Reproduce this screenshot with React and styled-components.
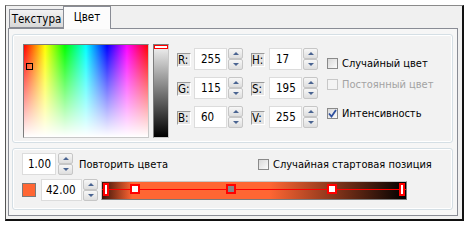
import styled, { createGlobalStyle } from 'styled-components'

const Global = createGlobalStyle`
    html, body {
        margin: 0;
        padding: 0;
        background: #ffffff;
    }
    * { box-sizing: border-box; }
    body {
        font-family: "DejaVu Sans Condensed", "DejaVu Sans", Verdana, sans-serif;
        font-size: 11px;
        color: #000;
    }
`

/* WINDOW */
const Frame = styled.div`
    margin: 5px 0 0 5px;
    width: 459px;
    height: 216px;
    background: #f0f0f0;
    border-top: 1px solid #8a8a8a;
    border-left: 1px solid #555;
    border-right: 2px solid #111;
    border-bottom: 2px solid #111;
    padding: 0 4px 3px 2px;
    display: flex;
    flex-direction: column;
`
const TabStrip = styled.div`
    height: 22px;
    display: flex;
    align-items: flex-end;
    padding-left: 1px;
    position: relative;
    z-index: 1;
`
const Tab = styled.div`
    width: ${p => p.$w}px;
    height: ${p => (p.$active ? 23 : 19)}px;
    margin-bottom: ${p => (p.$active ? -1 : 0)}px;
    margin-left: ${p => (p.$active ? -1 : 0)}px;
    border: 1px solid #898c95;
    border-bottom: ${p => (p.$active ? 'none' : '1px solid #898c95')};
    background: ${p => (p.$active ? '#fcfcfc' : 'linear-gradient(#f2f2f2, #d8d8d8)')};
    font-size: 11.5px;
    display: flex;
    justify-content: center;
    align-items: ${p => (p.$active ? 'flex-start' : 'center')};
    padding-top: ${p => (p.$active ? 3 : 0)}px;
`
const Panel = styled.div`
    flex: 1;
    border: 1px solid #898c95;
    background: #f6f6f6;
    padding: 5px 4px 5px 3px;
    display: flex;
    flex-direction: column;
    gap: 5px;
`
const Group = styled.div`
    border: 1px solid #d5dfe5;
    border-radius: 3px;
    box-shadow: inset 0 0 0 1px #ffffff;
    background: #f2f2f2;
    height: ${p => p.$h}px;
    padding: ${p => p.$pad};
`

/* COLOR PICKER */
const PickerRow = styled.div`
    display: flex;
    align-items: flex-start;
`
const Spectrum = styled.div`
    width: 126px;
    height: 94px;
    position: relative;
    border: 1px solid;
    border-color: #7c7c7c #c8c8c8 #c8c8c8 #7c7c7c;
    background:
        linear-gradient(rgba(255,255,255,0), #ffffff),
        linear-gradient(90deg, #ff0000 0%, #ffff00 17%, #00ff00 33%, #00ffff 50%, #0000ff 67%, #ff00ff 83%, #ff0000 100%);
`
const Selector = styled.div`
    position: absolute;
    left: 2px;
    top: 18px;
    width: 7px;
    height: 7px;
    border: 1px solid #000;
`
const Bright = styled.div`
    width: 16px;
    height: 94px;
    margin-left: 4px;
    position: relative;
    border: 1px solid;
    border-color: #7c7c7c #c8c8c8 #c8c8c8 #7c7c7c;
    background: linear-gradient(#f4f4f4, #000000);
`
const BrightMark = styled.div`
    position: absolute;
    left: 0;
    top: 0;
    width: 14px;
    height: 4px;
    border: 1px solid #ff0000;
    background: #fff;
`
const Fields = styled.div`
    display: grid;
    grid-template-columns: auto auto;
    row-gap: 7px;
    column-gap: 8px;
    margin-left: 8px;
    margin-top: 4px;
`
const Field = styled.div`
    display: flex;
    align-items: flex-start;
`
const Letter = styled.div`
    width: 14px;
    height: 14px;
    margin-top: 5px;
    margin-right: ${p => p.$gap}px;
    border: 1px solid;
    border-color: #9a9a9a #ffffff #ffffff #9a9a9a;
    background: #e4e4e4;
    font-size: 11.5px;
    line-height: 12px;
    white-space: nowrap;
`
const Input = styled.div`
    width: ${p => p.$w}px;
    height: 22px;
    background: #fff;
    border: 1px solid #dcdcdc;
    font-size: 11.5px;
    padding: 3px 0 0 ${p => p.$pl || 6}px;
`
const Spin = styled.div`
    width: 15px;
    height: 22px;
    margin-left: ${p => p.$gap || 1}px;
    display: flex;
    flex-direction: column;
`
const SpinBtn = styled.div`
    flex: 1;
    border: 1px solid #c6c6c6;
    border-radius: 2px;
    background: linear-gradient(#f7f7f7, #dedede);
    display: flex;
    align-items: center;
    justify-content: center;
`
const Arrow = styled.div`
    width: 0;
    height: 0;
    border-left: 3px solid transparent;
    border-right: 3px solid transparent;
    ${p => (p.$down ? 'border-top: 3px solid #4a6491;' : 'border-bottom: 3px solid #4a6491;')}
`

/* CHECKBOXES */
const Checks = styled.div`
    display: flex;
    flex-direction: column;
    margin-left: 9px;
    padding-top: 13px;
`
const CheckRow = styled.label`
    display: flex;
    align-items: center;
    gap: 4px;
    height: 13px;
    margin-bottom: ${p => p.$mb || 0}px;
    font-size: 11px;
    color: ${p => (p.$disabled ? '#a3a3a3' : '#000')};
    white-space: nowrap;
`
const Box = styled.div`
    width: 11px;
    height: 11px;
    border: 1px solid ${p => (p.$disabled ? '#c8c8c8' : '#8a8a8a')};
    background: ${p => (p.$disabled ? '#f4f4f4' : 'linear-gradient(135deg, #d8d8d8, #fbfbfb)')};
    display: flex;
    align-items: center;
    justify-content: center;
`

/* BOTTOM GROUP */
const Line = styled.div`
    display: flex;
    align-items: center;
    margin-bottom: ${p => p.$mb || 0}px;
`
const Caption = styled.span`
    width: ${p => p.$w}px;
    font-size: 11px;
    margin-left: ${p => p.$ml}px;
    white-space: nowrap;
`
const Swatch = styled.div`
    width: 14px;
    height: 14px;
    border: 1px solid #7a7a7a;
    background: #ff6633;
    margin-right: 5px;
`
const GradBar = styled.div`
    position: relative;
    width: 306px;
    height: 19px;
    margin-left: 3px;
    border: 1px solid;
    border-color: #c8c8c8 #7a7a7a #7a7a7a #c8c8c8;
    background: linear-gradient(90deg, #3a1208 0%, #ff6633 10%, #ff6633 55%, #000000 100%);
`
const RedLine = styled.div`
    position: absolute;
    left: 0;
    right: 0;
    top: 7px;
    height: 1px;
    background: #ff0000;
`
const Marker = styled.div`
    position: absolute;
    top: ${p => (p.$edge ? 1 : 2)}px;
    left: ${p => p.$x}px;
    width: ${p => (p.$edge ? 6 : 10)}px;
    height: ${p => (p.$edge ? 13 : 10)}px;
    border: 2px solid #ff0000;
    background: ${p => (p.$grey ? '#888888' : '#ffffff')};
`

const Spinner = ({gap}) => (
    <Spin $gap={gap}>
        <SpinBtn><Arrow /></SpinBtn>
        <SpinBtn><Arrow $down /></SpinBtn>
    </Spin>
)

const Check = ({label, checked, disabled, mb}) => (
    <CheckRow $disabled={disabled} $mb={mb}>
        <Box $disabled={disabled}>
            {checked && (
                <svg width="9" height="9" viewBox="0 0 9 9">
                    <path d="M1 4.5 L3.5 7.5 L8 1" fill="none" stroke="#2d4f9e" strokeWidth="1.8" />
                </svg>
            )}
        </Box>
        {label}
    </CheckRow>
)

const rgb = [['R:', '255'], ['G:', '115'], ['B:', '60']]
const hsv = [['H:', '17'], ['S:', '195'], ['V:', '255']]

const App = () => {
    return (
        <>
            <Global />
            <Frame>
                <TabStrip>
                    <Tab $w={55}>Текстура</Tab>
                    <Tab $active $w={48}>Цвет</Tab>
                </TabStrip>
                <Panel>
                    <Group $h={109} $pad="9px 0 0 10px">
                        <PickerRow>
                            <Spectrum><Selector /></Spectrum>
                            <Bright><BrightMark /></Bright>
                            <Fields>
                                {rgb.map((r, i) => (
                                    [
                                        <Field key={`rgb_${i}`}>
                                            <Letter $gap={3}>{r[0]}</Letter>
                                            <Input $w={33}>{r[1]}</Input>
                                            <Spinner gap={1} />
                                        </Field>,
                                        <Field key={`hsv_${i}`}>
                                            <Letter $gap={4}>{hsv[i][0]}</Letter>
                                            <Input $w={33}>{hsv[i][1]}</Input>
                                            <Spinner gap={1} />
                                        </Field>
                                    ]
                                ))}
                            </Fields>
                            <Checks>
                                <Check label="Случайный цвет" mb={8} />
                                <Check label="Постоянный цвет" disabled mb={16} />
                                <Check label="Интенсивность" checked />
                            </Checks>
                        </PickerRow>
                    </Group>
                    <Group $h={62} $pad="4px 0 0 9px">
                        <Line $mb={4}>
                            <Input $w={34} $pl={5}>1.00</Input>
                            <Spinner gap={2} />
                            <Caption $ml={6} $w={179}>Повторить цвета</Caption>
                            <Check label="Случайная стартовая позиция" />
                        </Line>
                        <Line>
                            <Swatch />
                            <Input $w={41} $pl={4}>42.00</Input>
                            <Spinner gap={1} />
                            <GradBar>
                                <RedLine />
                                <Marker $edge $x={1} />
                                <Marker $x={28} />
                                <Marker $x={124} $grey />
                                <Marker $x={225} />
                                <Marker $edge $x={297} />
                            </GradBar>
                        </Line>
                    </Group>
                </Panel>
            </Frame>
        </>
    )
}

export default App
